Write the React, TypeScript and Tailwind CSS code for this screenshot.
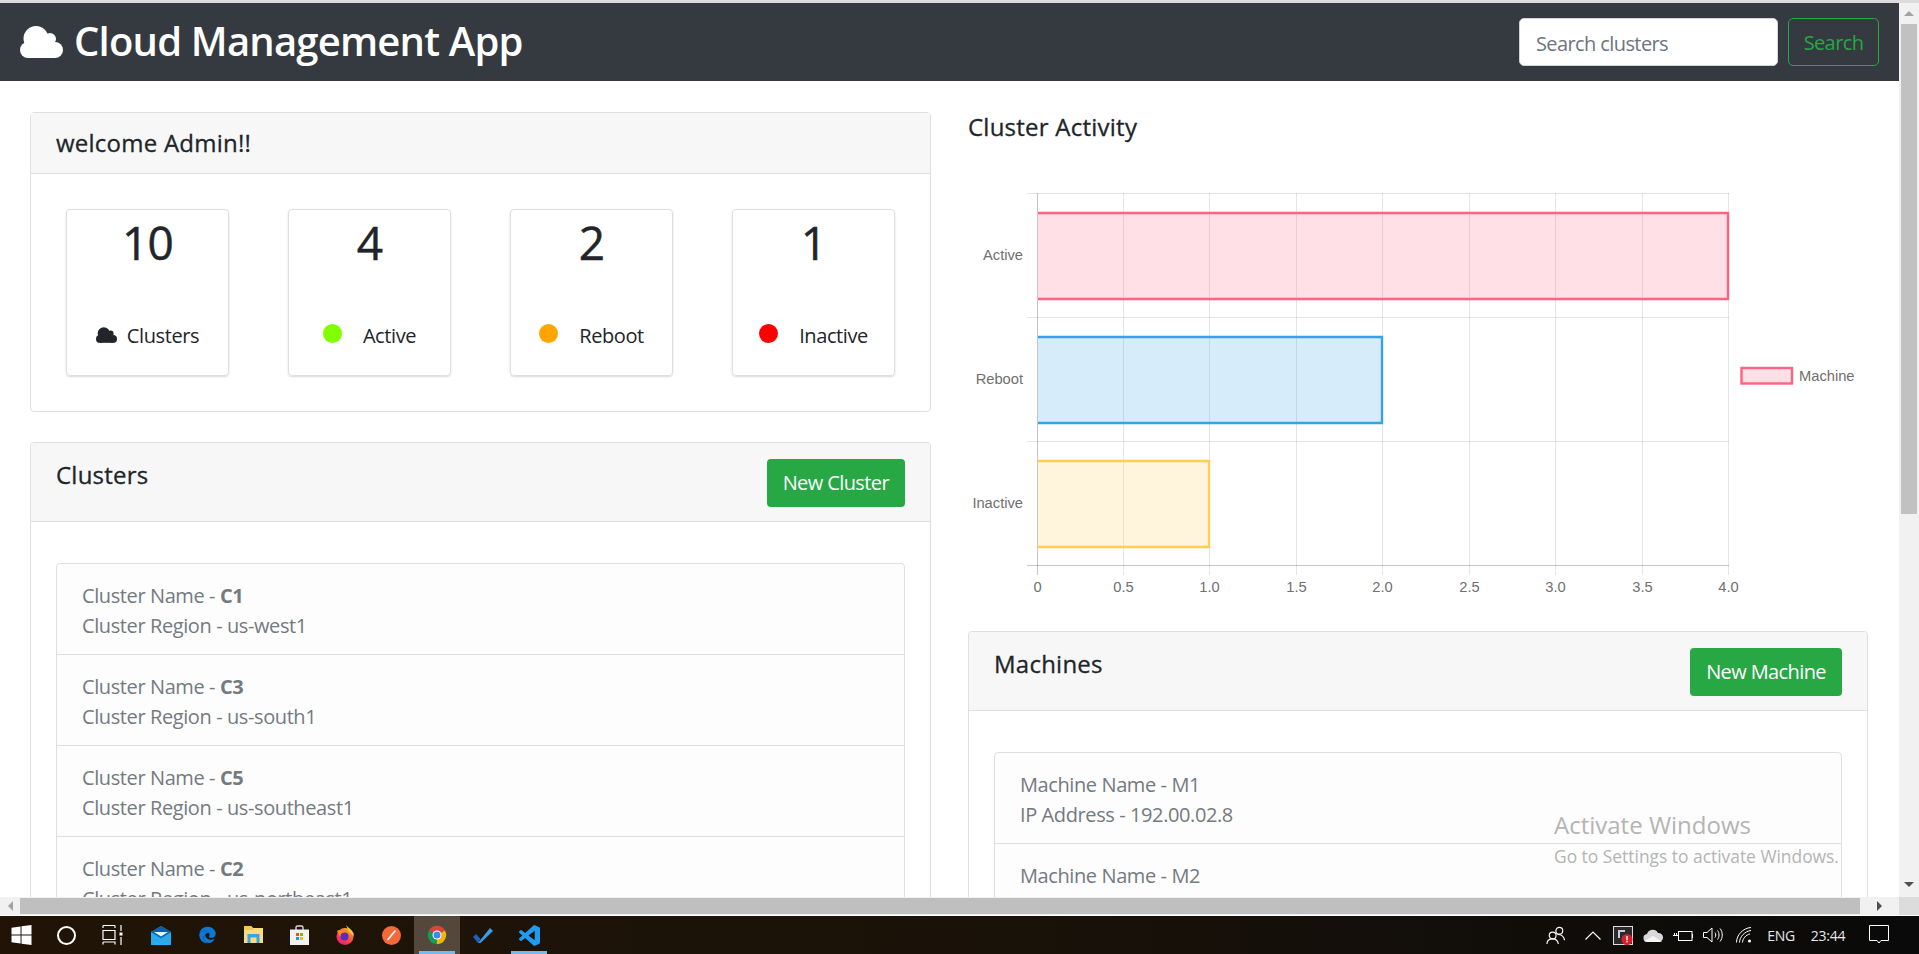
import { FaEdge } from 'react-icons/fa';

const clusters = [
  { name: 'C1', region: 'us-west1' },
  { name: 'C3', region: 'us-south1' },
  { name: 'C5', region: 'us-southeast1' },
  { name: 'C2', region: 'us-northeast1' },
];

const machines = [
  { name: 'M1', ip: '192.00.02.8' },
  { name: 'M2', ip: '192.00.02.9' },
];

const stats = [
  { value: '10', label: 'Clusters', dot: '' },
  { value: '4', label: 'Active', dot: 'bg-[#7fff00]' },
  { value: '2', label: 'Reboot', dot: 'bg-[#ffa500]' },
  { value: '1', label: 'Inactive', dot: 'bg-[#ff0000]' },
];

function Cloud({ className }: { className: string }) {
  return (
    <svg viewBox="0 0 43 32" className={className} fill="currentColor">
      <circle cx="16" cy="12.5" r="12.5" />
      <circle cx="30" cy="13" r="6" />
      <circle cx="35" cy="24" r="8" />
      <circle cx="8" cy="24" r="8" />
      <rect x="8" y="14" width="27" height="18" />
    </svg>
  );
}

function StatCard({ value, label, dot }: { value: string; label: string; dot: string }) {
  return (
    <div className="flex h-[167px] w-[163px] flex-col items-center rounded-[4px] border border-[#dfdfdf] shadow-[0_1px_2px_rgba(0,0,0,0.15)]">
      <div className="mt-[2px] h-[60px] text-[46px] leading-[60px] font-medium tracking-[-0.02em] text-[#212529] [-webkit-text-stroke:0.5px]">{value}</div>
      <div className="mt-[49px] flex h-[30px] items-center text-[20px] tracking-[-0.02em] text-[#212529]">
        {dot ? (
          <span className={`mr-[21px] -mt-[5px] h-[19px] w-[19px] rounded-full ${dot}`} />
        ) : (
          <Cloud className="mr-[10px] -mt-[2px] h-[16px] w-[21px]" />
        )}
        {label}
      </div>
    </div>
  );
}

function CardHeader({ title, action }: { title: string; action: string }) {
  return (
    <div className="flex h-[79px] items-start justify-between rounded-t-[4px] border-b border-[#dfdfdf] bg-[#f7f7f7] pr-[25px] pl-[25px] pt-[16px]">
      <h5 className="text-[24px] leading-[32px] font-medium tracking-[0.01em] text-[#212529] [-webkit-text-stroke:0.3px]">{title}</h5>
      <button className="h-[48px] rounded-[4px] bg-[#28a745] px-[16px] text-[20px] tracking-[-0.03em] text-white">{action}</button>
    </div>
  );
}

function ChartPanel() {
  const xTicks = [1037.5, 1123.5, 1209.5, 1296.5, 1382.5, 1469.5, 1555.5, 1642.5, 1728.5];
  const xLabels = ['0', '0.5', '1.0', '1.5', '2.0', '2.5', '3.0', '3.5', '4.0'];
  const bars = [
    { label: 'Active', top: 213, bottom: 299, right: 1728, fill: 'rgba(255,99,132,0.2)', stroke: '#ff6384', y: 260 },
    { label: 'Reboot', top: 337, bottom: 423, right: 1382, fill: 'rgba(54,162,235,0.2)', stroke: '#36a2eb', y: 384 },
    { label: 'Inactive', top: 461, bottom: 547, right: 1209, fill: 'rgba(255,206,86,0.2)', stroke: '#ffce56', y: 508 },
  ];
  return (
    <svg viewBox="968 170 900 430" className="mt-[28px] block h-[430px] w-[900px]" fontFamily="'Liberation Sans', Arial, sans-serif" fontSize="14.7">
      {[193.5, 317.5, 441.5].map((y) => (
        <line key={y} x1="1027" x2="1729" y1={y} y2={y} stroke="rgba(0,0,0,0.1)" />
      ))}
      <line x1="1027" x2="1729" y1="565.5" y2="565.5" stroke="rgba(0,0,0,0.22)" />
      {xTicks.map((x, i) => (
        <g key={x}>
          <line x1={x} x2={x} y1="193" y2="575" stroke={i === 0 ? 'rgba(0,0,0,0.22)' : 'rgba(0,0,0,0.1)'} />
          <text x={x} y="592" textAnchor="middle" fill="#707070">{xLabels[i]}</text>
        </g>
      ))}
      {bars.map((b) => (
        <g key={b.label}>
          <rect x="1038" y={b.top} width={b.right - 1038} height={b.bottom - b.top} fill={b.fill} />
          <path d={`M1038 ${b.top} H${b.right} V${b.bottom} H1038`} fill="none" stroke={b.stroke} strokeWidth="2.4" />
          <text x="1023" y={b.y} textAnchor="end" fill="#707070">{b.label}</text>
        </g>
      ))}
      <rect x="1741.5" y="368" width="50.5" height="15.5" fill="rgba(255,99,132,0.2)" stroke="#ff6384" strokeWidth="2.4" />
      <text x="1799" y="381" fill="#707070">Machine</text>
    </svg>
  );
}

function TaskSlot({ children, active, open }: { children: React.ReactNode; active?: boolean; open?: boolean }) {
  return (
    <div className={`relative flex h-[38px] w-[46px] items-center justify-center ${active ? 'bg-[#54483c]' : ''}`}>
      {children}
      {(active || open) && <span className="absolute right-[5px] bottom-0 left-[5px] h-[3px] bg-[#76b9ed]" />}
    </div>
  );
}

function Taskbar() {
  return (
    <div className="flex h-[38px] items-center bg-linear-to-r from-[#211407] via-[#1a1208] to-[#0a0a0a] text-white">
      <div className="flex h-full w-[43px] items-center justify-center pl-[0px]">
        <svg viewBox="0 0 21 21" className="h-[20px] w-[21px]" fill="#fff">
          <path d="M0 3 L9.5 1.6 V10 H0Z M10.5 1.4 L21 0 V10 H10.5Z M0 11 H9.5 V19.4 L0 18Z M10.5 11 H21 V21 L10.5 19.6Z" />
        </svg>
      </div>
      <TaskSlot>
        <span className="h-[19px] w-[19px] rounded-full border-[2.5px] border-white" />
      </TaskSlot>
      <TaskSlot>
        <svg viewBox="0 0 21 20" className="h-[20px] w-[21px]" fill="none" stroke="#fff" strokeWidth="1.2">
          <path d="M1 0.5H13 M1 3V0.5 M13 3V0.5 M1 5.5H13V14.5H1Z M1 17V19.5 M1 17H13V19.5 M19 0V6 M19 12V20" />
          <rect x="17.5" y="7.5" width="3" height="3" fill="#fff" stroke="none" />
        </svg>
      </TaskSlot>
      <div className="w-[3px]" />
      <TaskSlot>
        <svg viewBox="0 0 20 19" className="h-[19px] w-[20px]">
          <path d="M10 0 L20 6 V19 H0 V6Z" fill="#1b9de2" />
          <path d="M10 0 L20 6 L10 12 L0 6Z" fill="#0c5fa8" />
          <path d="M0 6.5 L10 13 L20 6.5 V19 H0Z" fill="#2aa9ec" />
          <path d="M3 6 L17 6 L10 10.5Z" fill="#e6f4fc" />
        </svg>
      </TaskSlot>
      <TaskSlot>
        <FaEdge className="h-[18px] w-[17px] text-[#0f78d4]" />
      </TaskSlot>
      <TaskSlot>
        <svg viewBox="0 0 19 18" className="h-[18px] w-[19px]">
          <path d="M0 0 H7 L9 2 H19 V17 H0Z" fill="#f9dc7f" />
          <path d="M0 0 H7 L9 2 V4 H0Z" fill="#f2c94f" />
          <path d="M3.5 17 V8 H15.5 V17 H12.5 V11.5 H6.5 V17Z" fill="#3aa5e3" />
        </svg>
      </TaskSlot>
      <TaskSlot>
        <svg viewBox="0 0 19 20" className="h-[20px] w-[19px]">
          <path d="M6 5 V2.5 Q6 1 7.5 1 H11.5 Q13 1 13 2.5 V5" fill="none" stroke="#d9d9d9" strokeWidth="1.4" />
          <rect y="4.5" width="19" height="15.5" fill="#f2f2f2" />
          <rect x="6" y="8" width="3" height="3" fill="#f25022" />
          <rect x="10" y="8" width="3" height="3" fill="#7fba00" />
          <rect x="6" y="12" width="3" height="3" fill="#00a4ef" />
          <rect x="10" y="12" width="3" height="3" fill="#ffb900" />
        </svg>
      </TaskSlot>
      <TaskSlot>
        <svg viewBox="0 0 20 20" className="h-[20px] w-[20px]">
          <defs>
            <linearGradient id="fx" x1="0.8" y1="0" x2="0.2" y2="1">
              <stop offset="0" stopColor="#ffb52e" />
              <stop offset="0.5" stopColor="#ff4f3a" />
              <stop offset="1" stopColor="#e31587" />
            </linearGradient>
          </defs>
          <circle cx="10" cy="11.5" r="8.5" fill="url(#fx)" />
          <path d="M11 0 C13 3 19 5 19 11 L14 7Z" fill="#ffc933" />
          <circle cx="9.5" cy="11.5" r="4" fill="#5b2fb5" />
          <path d="M2 6 C4 4 8 5 10 7.5 C7 7 5 9 5.5 12Z" fill="#ff8a1f" />
        </svg>
      </TaskSlot>
      <TaskSlot>
        <svg viewBox="0 0 19 19" className="h-[19px] w-[19px]">
          <circle cx="9.5" cy="9.5" r="9.5" fill="#f4683a" />
          <path d="M6 13.5 L13 5" stroke="#fff" strokeWidth="1.6" strokeLinecap="round" />
        </svg>
      </TaskSlot>
      <TaskSlot active>
        <svg viewBox="0 0 24 24" className="h-[20px] w-[20px]">
          <path d="M2.47 6.5 A11 11 0 0 1 21.53 6.5 L12 12Z" fill="#db4437" />
          <path d="M2.47 6.5 A11 11 0 0 0 12 23 L12 12Z" fill="#0f9d58" />
          <path d="M21.53 6.5 A11 11 0 0 1 12 23 L12 12Z" fill="#f4b400" />
          <circle cx="12" cy="12" r="5.4" fill="#fff" />
          <circle cx="12" cy="12" r="4.2" fill="#4285f4" />
        </svg>
      </TaskSlot>
      <TaskSlot>
        <svg viewBox="0 0 20 15" className="h-[15px] w-[20px]">
          <path d="M0 9 L3 6 L7.5 11 L5 15Z" fill="#1b62c0" />
          <path d="M5 15 L17 0 L20 3 L7.5 15Z" fill="#3c9be8" />
        </svg>
      </TaskSlot>
      <TaskSlot open>
        <svg viewBox="0 0 24 24" className="h-[21px] w-[21px]" fill="#1f9cf0">
          <path d="M23.15 2.587L18.21.21a1.494 1.494 0 0 0-1.705.29l-9.46 8.63-4.12-3.128a.999.999 0 0 0-1.276.057L.327 7.261A1 1 0 0 0 .326 8.74L3.899 12 .326 15.26a1 1 0 0 0 .001 1.479L1.65 17.94a.999.999 0 0 0 1.276.057l4.12-3.128 9.46 8.63a1.492 1.492 0 0 0 1.704.29l4.942-2.377A1.5 1.5 0 0 0 24 20.06V3.939a1.5 1.5 0 0 0-.85-1.352zm-5.146 14.861L10.826 12l7.178-5.448v10.896z" />
        </svg>
      </TaskSlot>

      <div className="ml-auto flex h-full items-center pr-[15px]">
        <div className="mr-[4px] flex w-[38px] justify-center">
          <svg viewBox="0 0 20 20" className="h-[19px] w-[19px]" fill="none" stroke="#fff" strokeWidth="1.2">
            <circle cx="14" cy="5" r="3.6" />
            <circle cx="7" cy="10" r="3.6" />
            <path d="M1 19 C1 15 3 13.5 7 13.5 C11 13.5 12.5 15 13 19 M12 9 C16 9 19 11 19.5 15" />
          </svg>
        </div>
        <div className="flex w-[30px] justify-center">
          <svg viewBox="0 0 16 9" className="h-[9px] w-[16px]" fill="none" stroke="#fff" strokeWidth="1.2">
            <path d="M0.5 8.5 L8 1 L15.5 8.5" />
          </svg>
        </div>
        <div className="flex w-[30px] justify-center">
          <svg viewBox="0 0 20 20" className="h-[20px] w-[20px]">
            <rect x="0.5" y="1.5" width="19" height="18" fill="#2b2b2b" stroke="#ddd" />
            <path d="M6 13V6H12" fill="none" stroke="#ccc" strokeWidth="2" />
            <circle cx="14" cy="14.5" r="5.5" fill="#d81e2c" />
            <rect x="13.3" y="11" width="1.4" height="4.4" fill="#fff" />
            <rect x="13.3" y="16" width="1.4" height="1.4" fill="#fff" />
          </svg>
        </div>
        <div className="flex w-[30px] justify-center">
          <svg viewBox="0 0 20 13" className="h-[13px] w-[20px]">
            <path d="M5 13 A4 4 0 0 1 4 5 A6 6 0 0 1 15 4 A4.5 4.5 0 0 1 16 13Z" fill="#d8d8d8" />
            <path d="M1.5 12 L10 7 L19 12.5 L16 13 H5Z" fill="#f4f4f4" />
          </svg>
        </div>
        <div className="flex w-[30px] justify-center">
          <svg viewBox="0 0 20 13" className="h-[13px] w-[20px]" fill="none" stroke="#fff" strokeWidth="1">
            <rect x="5.5" y="2.5" width="13.5" height="9" />
            <path d="M19.5 5V9 M0 6.5H5 M1.5 4V6.5 M3.5 4V6.5" />
          </svg>
        </div>
        <div className="flex w-[30px] justify-center">
          <svg viewBox="0 0 20 16" className="h-[16px] w-[20px]" fill="none" stroke="#fff" strokeWidth="1">
            <path d="M0.5 5.5H4L9 1V15L4 10.5H0.5Z M12 5.5C13 7 13 9 12 10.5 M14.5 3.5C16.5 6 16.5 10 14.5 12.5 M17 1.5C20 5 20 11 17 14.5" />
          </svg>
        </div>
        <div className="flex w-[32px] justify-center">
          <svg viewBox="0 0 16 16" className="h-[16px] w-[16px]" fill="none" stroke="#fff" strokeWidth="1">
            <path d="M0.5 15.5C0.5 8 7 1 15 0.5 M3.5 15.5C3.5 10 9 4 15 3.5 M6.5 15.5C6.5 12 10 7.5 14 7" />
            <circle cx="13.5" cy="14" r="1.6" fill="#fff" stroke="none" />
          </svg>
        </div>
        <span className="w-[42px] text-center text-[14px] tracking-[-0.02em] text-[#e8e8e8]">ENG</span>
        <span className="w-[52px] text-center text-[14px] tracking-[-0.02em] text-[#e8e8e8]">23:44</span>
        <div className="flex w-[50px] justify-center">
          <svg viewBox="0 0 20 20" className="h-[20px] w-[20px]" fill="none" stroke="#fff" strokeWidth="1">
            <path d="M0.5 0.5H19.5V15.5H12L10 18L8 15.5H0.5Z" />
          </svg>
        </div>
      </div>
    </div>
  );
}

export default function App() {
  return (
    <div className="relative flex h-screen flex-col overflow-hidden bg-white font-['Open_Sans',sans-serif]">
      <div className="h-[3px] bg-[#dcdcdc]" />
      <div className="flex min-h-0 flex-1">
        <div className="min-w-0 flex-1 overflow-hidden">
          {/* Navbar */}
          <nav className="flex h-[78px] items-center justify-between bg-[#343a40] pr-[20px] pl-[20px]">
            <div className="flex items-center">
              <Cloud className="h-[32px] w-[43px] text-white" />
              <span className="ml-[11px] -mt-[2px] text-[40px] leading-[48px] font-semibold tracking-[-0.02em] text-white">Cloud Management App</span>
            </div>
            <div className="flex items-center gap-[10px]">
              <input
                placeholder="Search clusters"
                className="h-[48px] w-[259px] rounded-[5px] border border-[#ced4da] bg-white px-[16px] pt-[2px] text-[20px] tracking-[-0.03em] placeholder:text-[#6c757d]"
              />
              <button className="h-[48px] w-[91px] rounded-[5px] border border-[#28a745] pt-[2px] text-[20px] tracking-[-0.03em] text-[#28a745]">Search</button>
            </div>
          </nav>

          <div className="grid grid-cols-[901px_900px] gap-x-[37px] pt-[31px] pl-[30px]">
            {/* Left column */}
            <div>
              <section className="h-[300px] rounded-[4px] border border-[#dfdfdf]">
                <div className="flex h-[61px] items-center border-b border-[#dfdfdf] bg-[#f7f7f7] px-[25px] text-[24px] font-medium tracking-[0.01em] text-[#212529] [-webkit-text-stroke:0.3px]">welcome Admin!!</div>
                <div className="flex justify-between px-[35px] pt-[35px]">
                  {stats.map((s) => (
                    <StatCard key={s.label} {...s} />
                  ))}
                </div>
              </section>
              <section className="mt-[30px] rounded-[4px] border border-[#dfdfdf]">
                <CardHeader title="Clusters" action="New Cluster" />
                <div className="px-[25px] pt-[41px] pb-[25px]">
                  <div className="rounded-[4px] border border-[#dfdfdf] bg-[#fdfdfd]">
                    {clusters.map((c, i) => (
                      <div key={c.name} className={`px-[25px] pt-[17px] pb-[13px] text-[20px] leading-[30px] tracking-[-0.02em] text-[#737a80] ${i ? 'border-t border-[#dfdfdf]' : ''}`}>
                        <div>Cluster Name - <b>{c.name}</b></div>
                        <div>Cluster Region - {c.region}</div>
                      </div>
                    ))}
                  </div>
                </div>
              </section>
            </div>

            {/* Right column */}
            <div>
              <h5 className="h-[30px] text-[24px] leading-[30px] font-medium tracking-[0.01em] text-[#212529] [-webkit-text-stroke:0.3px]">Cluster Activity</h5>
              <ChartPanel />
              <section className="mt-[31px] rounded-[4px] border border-[#dfdfdf]">
                <CardHeader title="Machines" action="New Machine" />
                <div className="px-[25px] pt-[41px] pb-[25px]">
                  <div className="rounded-[4px] border border-[#dfdfdf] bg-[#fdfdfd]">
                    {machines.map((m, i) => (
                      <div key={m.name} className={`px-[25px] pt-[17px] pb-[13px] text-[20px] leading-[30px] tracking-[-0.02em] text-[#737a80] ${i ? 'border-t border-[#dfdfdf]' : ''}`}>
                        <div>Machine Name - {m.name}</div>
                        <div>IP Address - {m.ip}</div>
                      </div>
                    ))}
                  </div>
                </div>
              </section>
            </div>
          </div>
        </div>

        {/* Vertical scrollbar */}
        <div className="flex w-[20px] shrink-0 flex-col items-center bg-[#f1f1f1]">
          <div className="flex h-[21px] w-full items-center justify-center">
            <span className="h-0 w-0 border-x-[5px] border-b-[5px] border-x-transparent border-b-[#a3a3a3]" />
          </div>
          <div className="h-[490px] w-[16px] bg-[#c1c1c1]" />
          <div className="mt-auto flex h-[20px] w-full items-center justify-center pb-[6px]">
            <span className="h-0 w-0 border-x-[5px] border-t-[5px] border-x-transparent border-t-[#505050]" />
          </div>
        </div>
      </div>

      {/* Horizontal scrollbar */}
      <div className="flex h-[18px] items-stretch bg-[#f1f1f1]">
        <div className="flex w-[20px] items-center justify-center">
          <span className="h-0 w-0 border-y-[5px] border-r-[5px] border-y-transparent border-r-[#a3a3a3]" />
        </div>
        <div className="my-[1px] w-[1840px] bg-[#bfbfbf]" />
        <div className="flex flex-1 items-center justify-center pr-[1px]">
          <span className="h-0 w-0 border-y-[5px] border-l-[5px] border-y-transparent border-l-[#505050]" />
        </div>
        <div className="w-[20px] bg-[#dcdcdc]" />
      </div>
      <div className="h-[1px] bg-white" />
      <Taskbar />

      {/* Windows activation watermark */}
      <div className="pointer-events-none absolute top-[807px] left-[1554px] text-[#b4b4b4]">
        <div className="text-[24px] leading-[36px]">Activate Windows</div>
        <div className="mt-[1px] text-[17.4px] leading-[24px]">Go to Settings to activate Windows.</div>
      </div>
    </div>
  );
}
